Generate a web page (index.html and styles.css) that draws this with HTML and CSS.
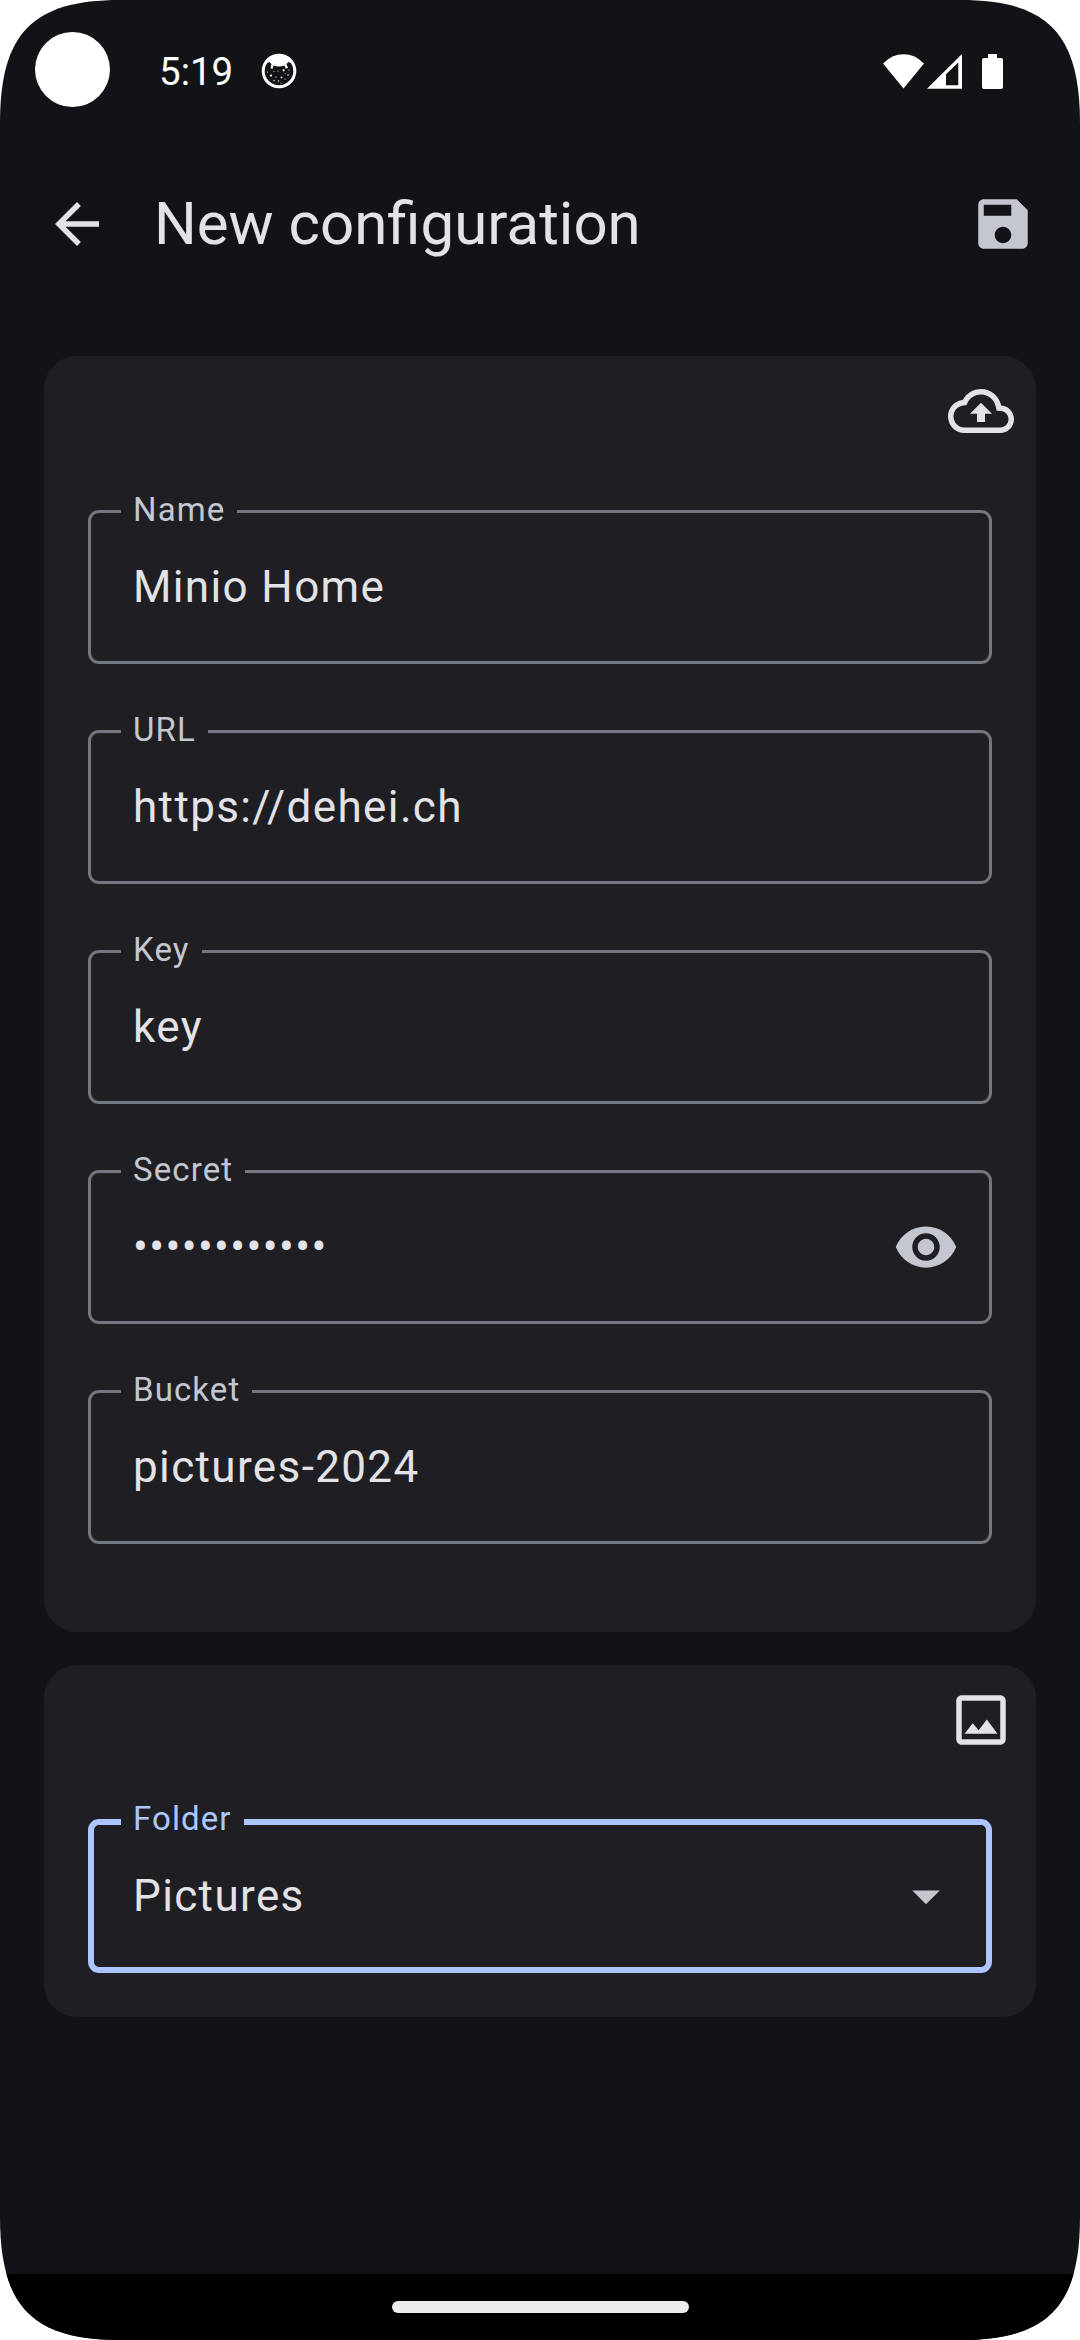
FILE: index.html
```html
<!DOCTYPE html>
<html lang="en">
<head>
<meta charset="utf-8">
<title>New configuration</title>
<link rel="stylesheet" href="styles.css">
</head>
<body>
<div class="screen">
  <header class="status-bar">
    <span class="camera"></span>
    <span class="clock">5:19</span>
    <svg class="app-badge" viewBox="0 0 36 36">
      <circle cx="18" cy="18" r="15.8" fill="none" stroke="#fff" stroke-width="3"/>
      <path fill="#fff" d="M6 10L9 4Q18 0 27 4L30 10L27.500 9L25.500 11L27 15L24.500 15.500L23.500 12.500Q18 14.500 12.500 12.500L11.500 16L9.500 15L10.500 11L8.500 9Z"/>
      <g fill="#fff">
        <circle cx="22.600" cy="17.300" r="1.100"/><circle cx="10" cy="22.600" r="1.100"/><circle cx="20.500" cy="24.400" r=".9"/>
        <circle cx="13" cy="18.500" r=".5"/><circle cx="17" cy="18" r=".6"/><circle cx="15" cy="24" r=".6"/>
        <circle cx="27" cy="22" r=".7"/><circle cx="24" cy="26" r=".6"/><circle cx="13" cy="27.500" r=".7"/>
        <circle cx="17.500" cy="28" r=".7"/><circle cx="20" cy="30" r=".6"/><circle cx="6.500" cy="19" r=".6"/>
        <circle cx="24" cy="20.800" r=".5"/><circle cx="28" cy="17" r=".6"/>
      </g>
    </svg>
    <span class="indicators">
      <svg class="wifi" viewBox="0 0 41 35"><path d="M0 9.500Q9 .3 20.500 .3T41 9.500L20.500 34.500Z"/></svg>
      <svg class="signal" viewBox="0 0 35 35"><path fill-rule="evenodd" d="M0 34.700L35 0V34.700ZM19 20.300V31.300H31.300V8.500Z"/></svg>
      <svg class="battery" viewBox="0 0 21 35"><path d="M6 0H15V4H19Q21 4 21 6V33Q21 35 19 35H2Q0 35 0 33V6Q0 4 2 4H6Z"/></svg>
    </span>
  </header>

  <nav class="app-bar">
    <svg class="icon" viewBox="0 0 24 24"><path d="M20 11H7.830l5.590-5.590L12 4l-8 8 8 8 1.410-1.410L7.830 13H20v-2z"/></svg>
    <h1 class="title">New configuration</h1>
    <svg class="icon muted" viewBox="0 0 24 24"><path d="M17 3H5c-1.110 0-2 .9-2 2v14c0 1.100.89 2 2 2h14c1.100 0 2-.9 2-2V7l-4-4zm-5 16c-1.660 0-3-1.340-3-3s1.340-3 3-3 3 1.340 3 3-1.340 3-3 3zm3-10H5V5h10v4z"/></svg>
  </nav>

  <main class="content">
    <section class="card remote">
      <svg class="icon card-icon" viewBox="0 0 24 24"><path d="M19.350 10.040C18.670 6.590 15.640 4 12 4 9.110 4 6.600 5.640 5.350 8.040 2.340 8.360 0 10.910 0 14c0 3.310 2.690 6 6 6h13c2.760 0 5-2.240 5-5 0-2.640-2.050-4.780-4.650-4.960zM19 18H6c-2.210 0-4-1.790-4-4 0-2.050 1.530-3.760 3.560-3.970l1.070-.11.5-.95C8.080 7.140 9.940 6 12 6c2.620 0 4.880 1.860 5.390 4.430l.3 1.500 1.530.11c1.560.1 2.780 1.410 2.780 2.960 0 1.650-1.350 3-3 3zM8 13h2.550v3h2.900v-3H16l-4-4z"/></svg>
      <fieldset class="field"><legend class="label">Name</legend><div class="value">Minio Home</div></fieldset>
      <fieldset class="field"><legend class="label">URL</legend><div class="value">https://dehei.ch</div></fieldset>
      <fieldset class="field"><legend class="label">Key</legend><div class="value">key</div></fieldset>
      <fieldset class="field"><legend class="label">Secret</legend><div class="value">••••••••••••
        <svg class="icon muted" viewBox="0 0 24 24"><path d="M12 4.500C7 4.500 2.730 7.610 1 12c1.730 4.390 6 7.500 11 7.500s9.270-3.110 11-7.500c-1.730-4.390-6-7.500-11-7.500zM12 17c-2.760 0-5-2.240-5-5s2.240-5 5-5 5 2.240 5 5-2.240 5-5 5zm0-8c-1.660 0-3 1.340-3 3s1.340 3 3 3 3-1.340 3-3-1.340-3-3-3z"/></svg></div></fieldset>
      <fieldset class="field"><legend class="label">Bucket</legend><div class="value">pictures-2024</div></fieldset>
    </section>

    <section class="card local">
      <svg class="icon card-icon" viewBox="0 0 24 24"><path d="M19 5v14H5V5h14m0-2H5c-1.100 0-2 .9-2 2v14c0 1.100.9 2 2 2h14c1.100 0 2-.9 2-2V5c0-1.100-.9-2-2-2zm-4.860 8.860l-3 3.870L9 13.140 6 17h12l-3.860-5.140z"/></svg>
      <fieldset class="field focused"><legend class="label">Folder</legend><div class="value">Pictures
        <svg class="icon muted" viewBox="0 0 24 24"><path d="M7 10l5 5 5-5z"/></svg></div></fieldset>
    </section>
  </main>

  <footer class="nav-bar"><span class="handle"></span></footer>
</div>
</body>
</html>
```
FILE: styles.css
```css
* {
  box-sizing: border-box;
}

body {
  margin: 0;
  background: #fff;
  font-family: Roboto, "Liberation Sans", sans-serif;
}

.screen {
  display: flex;
  flex-direction: column;
  width: 1080px;
  height: 2340px;
  background: #121316;
  color: #e3e2e6;
  clip-path: path("M0 123C0 33 33 0 120 0H960C1047 0 1080 33 1080 123V2217C1080 2307 1047 2340 960 2340H120C33 2340 0 2307 0 2217Z");
}

.status-bar {
  display: flex;
  align-items: center;
  height: 140px;
  padding: 2px 77px 0 35px;
  color: #fff;
  fill: #fff;
}

.camera {
  width: 75px;
  height: 75px;
  margin: 0 49px 3px 0;
  border-radius: 50%;
  background: #fff;
}

.clock {
  width: 102px;
  padding-top: 2px;
  font-size: 38.5px;
  line-height: 46px;
}

.app-badge {
  width: 36px;
  height: 36px;
}

.indicators {
  display: flex;
  margin-left: auto;
}

.wifi {
  width: 41px;
  height: 35px;
  margin-right: 3px;
}

.signal {
  width: 35px;
  height: 35px;
  margin-right: 20px;
}

.battery {
  width: 21px;
  height: 35px;
}

.icon {
  display: block;
  flex: none;
  width: 66px;
  height: 66px;
  fill: #e3e2e6;
}

.icon.muted {
  fill: #c4c6d0;
}

.app-bar {
  display: flex;
  align-items: center;
  height: 168px;
  padding: 0 44px;
}

.title {
  flex: 1;
  margin: 0 0 2px 44px;
  font-size: 60px;
  font-weight: 400;
  line-height: 77px;
}

.content {
  display: flex;
  flex: 1;
  flex-direction: column;
  gap: 33px;
  padding: 48px 44px 0;
}

.card {
  display: flex;
  flex-direction: column;
  gap: 46px;
  padding: 22px 44px 0;
  border-radius: 33px;
  background: #1f1f23;
}

.remote {
  height: 1276px;
}

.local {
  height: 352px;
  gap: 47px;
}

.card-icon {
  align-self: flex-end;
  margin-right: -22px;
}

.field {
  height: 174px;
  margin: 0;
  padding: 0 30px;
  border: 3px solid #74777f;
  border-radius: 11px;
}

.label {
  height: 43px;
  padding: 0 12px;
  color: #c4c6d0;
  font-size: 33px;
  letter-spacing: 1.1px;
  line-height: 39px;
}

.value {
  display: flex;
  align-items: center;
  justify-content: space-between;
  height: 108px;
  padding-left: 12px;
  font-size: 44px;
  letter-spacing: 1.375px;
  line-height: 66px;
}

.focused {
  height: 173px;
  padding: 0 27px;
  border: 6px solid #adc6ff;
}

.focused .label {
  height: 44px;
  color: #adc6ff;
  line-height: 37px;
}

.focused .value {
  height: 104px;
}

.nav-bar {
  display: flex;
  align-items: center;
  justify-content: center;
  height: 66px;
  background: #000;
}

.handle {
  width: 297px;
  height: 12px;
  border-radius: 6px;
  background: #ececec;
}
```
